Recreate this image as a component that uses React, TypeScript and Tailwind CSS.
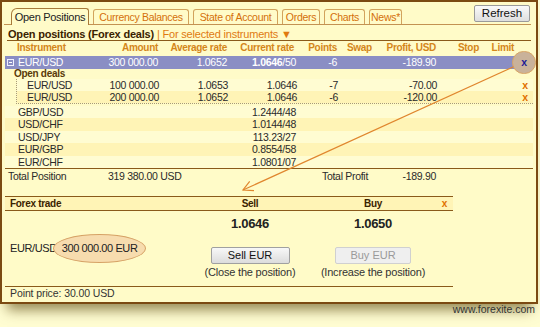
import React from 'react';

const GRID = 'grid grid-cols-[95px_58px_69px_69px_41px_43px_56px_49px_31px_16px] items-center';
const DEAL_GRID = 'grid grid-cols-[84px_58px_69px_69px_41px_43px_56px_49px_31px_16px] items-center';

const others: [string, string, string][] = [
  ['GBP/USD', '1.2444/48', 'h-[12px] bg-[#fffcd2]'],
  ['USD/CHF', '1.0144/48', 'h-[13px] bg-[#fff4b6]'],
  ['USD/JPY', '113.23/27', 'h-[12px] bg-[#fffcd2]'],
  ['EUR/GBP', '0.8554/58', 'h-[13px] bg-[#fff4b6]'],
  ['EUR/CHF', '1.0801/07', 'h-[12px] bg-[#fffcd2]'],
];

const deals = [
  { amt: '100 000.00', avg: '1.0653', cur: '1.0646', pts: '-7', profit: '-70.00', bg: 'bg-[#fffcd2]' },
  { amt: '200 000.00', avg: '1.0652', cur: '1.0646', pts: '-6', profit: '-120.00', bg: 'bg-[#fff4b6]' },
];

function Tab({ label, w, active }: { label: string; w: string; active?: boolean }) {
  if (active) {
    return (
      <div
        className={`${w} h-[17px] -mb-px flex items-center justify-center border border-b-0 border-[#a87a3a] rounded-tl-[6px] rounded-tr-[3px] bg-[#fffbc8] text-[#222] text-[11px] tracking-[-0.3px]`}
      >
        {label}
      </div>
    );
  }
  return (
    <div
      className={`${w} h-[15px] flex items-center justify-center border border-b-0 border-[#d2a35c] rounded-t-[3px] bg-[#fffbc8] text-[#d4700a] text-[10.5px] tracking-[-0.3px]`}
    >
      {label}
    </div>
  );
}

export default function App() {
  return (
    <div className="relative w-[540px] h-[327px] overflow-hidden whitespace-nowrap bg-[#fffdd2] text-[#2a2a2a] text-[10.5px] tracking-[-0.3px] leading-none [font-family:'Liberation_Sans',Arial,sans-serif]">
      <div className="w-[538px] h-[304px] border-2 border-[#7b4a12] bg-[#fffbc8] flex flex-col shadow-[0_13px_12px_-7px_rgba(80,60,0,0.6)]">
        {/* Tabs */}
        <div className="flex items-end gap-[4px] h-[23px] ml-[2px] mr-[5px] border-b border-[#c39252] pl-[7px] pr-[1px]">
          <Tab label="Open Positions" w="w-[78px]" active />
          <Tab label="Currency Balances" w="w-[96px]" />
          <Tab label="State of Account" w="w-[85px]" />
          <Tab label="Orders" w="w-[38px]" />
          <Tab label="Charts" w="w-[41px]" />
          <Tab label="News*" w="w-[33px]" />
          <button className="ml-auto mb-[2px] w-[56px] h-[17px] flex items-center justify-center border border-[#9a9a9a] rounded-[2px] bg-gradient-to-b from-[#fafafa] to-[#dedede] text-[#111] text-[11.5px] tracking-normal">
            Refresh
          </button>
        </div>

        {/* Title */}
        <div className="h-[16px] mx-[5px] border-b border-[#8a5a1a] flex items-center pt-[3px] pl-[1px] text-[11px] tracking-[-0.2px]">
          <span className="font-bold text-[#3a2200]">Open positions (Forex deals)</span>
          <span className="text-[#e07a10] ml-[3px]">| For selected instruments ▼</span>
        </div>

        {/* Table */}
        <div className="mx-[3px] flex flex-col">
          <div className={`${GRID} h-[14px] text-[10px] font-bold text-[#d4861a]`}>
            <div className="pl-[12px]">Instrument</div>
            <div className="text-right">Amount</div>
            <div className="text-right">Average rate</div>
            <div className="text-right pr-[2px]">Current rate</div>
            <div className="text-right">Points</div>
            <div className="pl-[10px]">Swap</div>
            <div className="text-right">Profit, USD</div>
            <div className="text-right pr-[6px]">Stop</div>
            <div className="text-right pr-[2px]">Limit</div>
            <div />
          </div>

          {/* Selected position */}
          <div className={`${GRID} mt-[1px] h-[13px] bg-[#8a8ec4] text-white`}>
            <div className="flex items-center pl-[2px] gap-[4px]">
              <span className="w-[7px] h-[7px] border border-[#f0f0ff] flex items-center justify-center">
                <span className="w-[3px] h-px bg-white" />
              </span>
              <span>EUR/USD</span>
            </div>
            <div className="text-right">300 000.00</div>
            <div className="text-right">1.0652</div>
            <div className="text-right">
              <span className="font-bold">1.0646</span>/50
            </div>
            <div className="text-right">-6</div>
            <div />
            <div className="text-right">-189.90</div>
            <div />
            <div />
            <div className="relative flex items-center justify-center h-full">
              <span className="absolute left-[-4px] top-[-5px] w-[24px] h-[23px] rounded-full border-[1.5px] border-[#d9a464] bg-[#c9b29a]" />
              <span className="relative font-bold text-[#1c1c96]">x</span>
            </div>
          </div>

          <div className="h-[10px] flex items-center pl-[9px] text-[10px] font-bold text-[#5a3a08]">Open deals</div>

          <div className="ml-[11px] border-l border-b border-dotted border-[#a89a78]">
            {deals.map((d, i) => (
              <div key={i} className={`${DEAL_GRID} h-[12px] ${d.bg}`}>
                <div className="pl-[10px]">EUR/USD</div>
                <div className="text-right">{d.amt}</div>
                <div className="text-right">{d.avg}</div>
                <div className="text-right">{d.cur}</div>
                <div className="text-right">{d.pts}</div>
                <div />
                <div className="text-right">{d.profit}</div>
                <div />
                <div />
                <div className="text-center font-bold text-[#e07000]">x</div>
              </div>
            ))}
          </div>

          <div className="mt-[2px] flex flex-col">
            {others.map(([name, rate, cls]) => (
              <div key={name} className={`${GRID} ${cls}`}>
                <div className="pl-[13px]">{name}</div>
                <div />
                <div />
                <div className="text-right">{rate}</div>
              </div>
            ))}
          </div>

          <div className="h-[16px] border-t border-[#8a5a1a] flex items-center">
            <div className="w-[103px] pl-[3px]">Total Position</div>
            <div className="w-[214px]">319 380.00 USD</div>
            <div className="w-[80px]">Total Profit</div>
            <div className="w-[34px] text-right">-189.90</div>
          </div>
        </div>

        {/* Forex trade */}
        <div className="mt-[12px] mx-[3px] w-[448px] border-t border-b border-[#8a5a1a]">
          <div className="grid grid-cols-[185px_120px_126px_17px] items-center h-[14px] border-b border-[#8a5a1a] bg-[#fff4b6] text-[10px] font-bold text-[#3a2200]">
            <div className="pl-[5px]">Forex trade</div>
            <div className="text-center">Sell</div>
            <div className="text-center">Buy</div>
            <div className="text-center text-[#e07000]">x</div>
          </div>
          <div className="grid grid-cols-[185px_120px_126px_17px] h-[75px]">
            <div className="flex items-center pl-[5px] text-[11px] tracking-[-0.4px] text-[#222]">
              <span>EUR/USD</span>
              <span className="-ml-[4px] h-[29px] px-[8px] flex items-center rounded-[50%] border border-[#d6a266] bg-[#f7dcae]">
                300 000.00 EUR
              </span>
            </div>
            <div className="flex flex-col items-center pt-[5px]">
              <div className="h-[15px] flex items-center text-[13px] font-bold text-[#222]">1.0646</div>
              <button className="mt-[16px] w-[79px] h-[17px] flex items-center justify-center border border-[#a0a0a0] rounded-[2px] bg-gradient-to-b from-[#f8f8f8] to-[#dcdcdc] text-[#111] text-[11px] tracking-normal">
                Sell EUR
              </button>
              <div className="mt-[2px] h-[13px] flex items-center text-[11px] tracking-[-0.2px] text-[#333]">(Close the position)</div>
            </div>
            <div className="flex flex-col items-center pt-[5px]">
              <div className="h-[15px] flex items-center text-[13px] font-bold text-[#222]">1.0650</div>
              <button className="mt-[16px] w-[76px] h-[17px] flex items-center justify-center border border-[#d0d0d0] rounded-[2px] bg-[#efefef] text-[#9a9a9a] text-[11px] tracking-normal">
                Buy EUR
              </button>
              <div className="mt-[2px] h-[13px] flex items-center text-[11px] tracking-[-0.2px] text-[#333]">(Increase the position)</div>
            </div>
            <div />
          </div>
        </div>

        <div className="h-[13px] flex items-center pl-[8px] text-[10.5px] tracking-[-0.1px] text-[#333]">Point price: 30.00 USD</div>
      </div>

      <div className="h-[11px] pr-[5px] flex items-center justify-end text-[10.5px] tracking-normal text-[#333]">www.forexite.com</div>

      {/* Annotation arrow */}
      <svg className="absolute left-0 top-0 pointer-events-none" width="540" height="327" viewBox="0 0 540 327">
        <line x1="513.5" y1="66.8" x2="243" y2="190" stroke="#e0862e" strokeWidth="1.2" />
        <polyline points="254,190.7 243,190 249.7,181.3" fill="none" stroke="#e0862e" strokeWidth="1.2" />
      </svg>
    </div>
  );
}
